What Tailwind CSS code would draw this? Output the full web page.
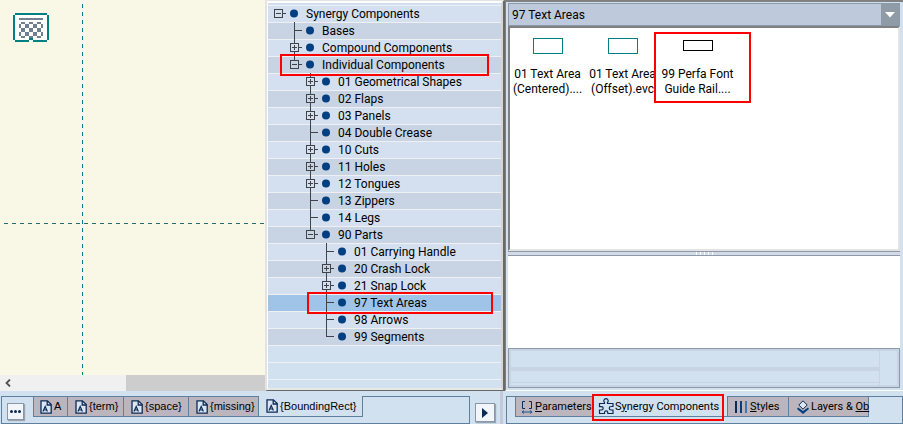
<!DOCTYPE html>
<html lang="en">
<head>
    <meta charset="utf-8" />
    <title>Synergy Components</title>
    <meta name="viewport" content="width=device-width, initial-scale=1" />
    <script src="https://cdn.jsdelivr.net/npm/@tailwindcss/browser@4"></script>
</head>
<body class="h-screen overflow-hidden flex bg-[#d1e1f0] text-black font-['Roboto',sans-serif] text-[12px]">
    <!-- Icons -->
    <svg class="hidden">
        <symbol id="icon-page" viewBox="0 0 12 14">
            <path d="M1 .8h6.4L11.2 4.6v8.6H1z" fill="#dce6f2" stroke="#0b2a55" stroke-width="1.3" />
            <path d="M7.2 1v4h4" fill="none" stroke="#0b2a55" stroke-width="1.3" />
            <path d="M3 11.5L5.2 6.5L7.4 11.5M3.6 10h3.2" fill="none" stroke="#0b2a55" stroke-width="1.2" />
        </symbol>
    </svg>

    <div class="flex-1 min-w-0 flex flex-col">
        <div class="flex-1 min-h-0 flex">
            <!-- Drawing -->
            <section class="flex-1 min-w-0 flex flex-col">
                <div class="flex-1 relative bg-[#f9f8e6]">
                    <div class="absolute left-[82px] top-1 bottom-0 w-px bg-[repeating-linear-gradient(to_bottom,#008080_0_4px,transparent_4px_8px)]"></div>
                    <div class="absolute left-1 right-0 top-[223px] h-px bg-[repeating-linear-gradient(to_right,#20706c_0_4px,transparent_4px_8px)]"></div>
                    <svg class="absolute left-[13px] top-[13px]" width="36" height="29" viewBox="0 0 36 29" shape-rendering="crispEdges">
                        <path d="M2 2h32v25H2z" fill="#fff" />
                        <path d="M2 0h32v2H2zM0 2h2v25H0zM34 2h2v25h-2zM2 27h14v2H2zM20 27h14v2H20zM16 25h4v2h-4z" fill="#008080" />
                        <path d="M6 5h24v2H6z
                            M8 9h4v2H8zM16 9h4v2h-4zM24 9h4v2h-4z
                            M6 11h2v4H6zM12 11h4v4h-4zM20 11h4v4h-4zM28 11h2v4h-2z
                            M8 15h4v4H8zM16 15h4v4h-4zM24 15h4v4h-4z
                            M6 19h2v4H6zM12 19h4v4h-4zM20 19h4v4h-4zM28 19h2v4h-2z
                            M8 23h4v2H8zM16 23h4v2h-4zM24 23h4v2h-4z" fill="#708090" />
                    </svg>
                </div>
                <div class="h-4 flex bg-[#f0f0f0]">
                    <button type="button" aria-label="Scroll left" class="w-4 flex items-center justify-center">
                        <svg width="6" height="8" viewBox="0 0 6 8"><path d="M5 .5L1.5 4L5 7.5" fill="none" stroke="#505050" stroke-width="1.8" /></svg>
                    </button>
                    <div class="flex-1 flex justify-end"><div class="w-[139px] bg-[#cdcdcd]"></div></div>
                </div>
            </section>

            <!-- Component tree -->
            <nav class="w-60 flex flex-col border-l-2 border-l-[#e3e3e3] border-t border-t-[#e3e3e3] border-r-2 border-r-[#696969] border-b border-b-[#696969]">
                <div class="flex-1 min-h-0 flex flex-col overflow-hidden bg-[#d1e1f0] border-l border-l-white border-t-2 border-t-white border-r-2 border-r-[#d8d5d0] border-b-2 border-b-[#e8e8e8]">
                    <ul id="tree" class="pt-0.5" role="tree"></ul>
                    <div class="flex-1 bg-[repeating-linear-gradient(to_bottom,#eef0f4_0_1px,#d1e1f0_1px_17px)]"></div>
                </div>
            </nav>
        </div>

        <!-- Sheet tabs -->
        <div class="h-[33px] pl-px pt-[5px] pr-[10px] flex font-['Liberation_Sans',sans-serif] text-[11px]">
            <div class="w-8 border-l border-t border-b border-[#5f7f9f] pl-[5px] pt-[6px]">
                <button type="button" aria-label="All sheets" class="w-[17px] h-[17px] flex items-center justify-center gap-px bg-[#f2f6fa] border border-[#8898a8] shadow-[1px_1px_1px_#98a4b0]">
                    <span class="size-[3px] rounded-full bg-[#0b2a55]"></span>
                    <span class="size-[3px] rounded-full bg-[#0b2a55]"></span>
                    <span class="size-[3px] rounded-full bg-[#0b2a55]"></span>
                </button>
            </div>
            <div class="flex items-start border-b border-[#5f7f9f]" role="tablist">
                <button type="button" role="tab" class="h-[21px] w-[35px] pl-[6px] flex items-center gap-0.5 bg-[#bcb5bd] border border-[#5f7f9f]">
                    <svg width="12" height="14"><use href="#icon-page" /></svg>A
                </button>
                <button type="button" role="tab" class="h-[21px] w-14 pl-[7px] flex items-center gap-0.5 bg-[#bcb5bd] border border-l-0 border-[#5f7f9f]">
                    <svg width="12" height="14"><use href="#icon-page" /></svg>{term}
                </button>
                <button type="button" role="tab" class="h-[21px] w-[65px] pl-[7px] flex items-center gap-0.5 bg-[#bcb5bd] border border-l-0 border-[#5f7f9f]">
                    <svg width="12" height="14"><use href="#icon-page" /></svg>{space}
                </button>
                <button type="button" role="tab" class="h-[21px] w-[70px] pl-[7px] flex items-center gap-0.5 bg-[#bcb5bd] border border-l-0 border-[#5f7f9f]">
                    <svg width="12" height="14"><use href="#icon-page" /></svg>{missing}
                </button>
                <button type="button" role="tab" aria-selected="true" class="h-[21px] w-[104px] pl-[7px] flex items-center gap-0.5 border-r border-b border-[#5f7f9f]">
                    <svg width="12" height="14"><use href="#icon-page" /></svg>{BoundingRect}
                </button>
            </div>
            <div class="flex-1 border-t border-r border-b border-[#5f7f9f]"></div>
            <button type="button" aria-label="Next sheet" class="ml-[5px] mt-[7px] w-5 h-[19px] flex items-center justify-center bg-[#f2f6fa] border border-[#8898a8] shadow-[1px_1px_1px_#98a4b0]">
                <svg width="6" height="10"><path d="M0 0L6 5L0 10z" fill="#0b2a55" /></svg>
            </button>
        </div>
    </div>

    <!-- Side panel -->
    <aside class="w-[398px] flex flex-col">
        <div class="flex-1 min-h-0 flex flex-col pt-px pl-0.5 pr-[3px] pb-0.5 border-t-2 border-l border-[#808080] border-b border-b-white">
            <button type="button" class="h-[23px] shrink-0 pl-[3px] flex items-center justify-between bg-[#becadb] border border-[#8c99ab] text-left">
                97 Text Areas
                <span class="h-full w-[18px] flex items-center justify-center bg-[#909ba8]">
                    <svg width="10" height="6"><path d="M0 0h10L5 5.5z" fill="#fff" /></svg>
                </span>
            </button>
            <ul class="flex-1 flex items-start bg-white border-2 border-t-[#808080] border-l-[#808080] border-r-[#e3e3e3] border-b-[#e3e3e3] text-center leading-[15px]">
                <li class="w-[75px] pt-[10px] flex flex-col items-center">
                    <div class="h-[29px]"><div class="w-[30px] h-4 border border-[#008080]"></div></div>
                    <span>01 Text Area (Centered)....</span>
                </li>
                <li class="w-[75px] pt-[10px] flex flex-col items-center">
                    <div class="h-[29px]"><div class="w-[30px] h-4 border border-[#008080]"></div></div>
                    <span>01 Text Area (Offset).evc</span>
                </li>
                <li class="w-[75px] pt-[10px] flex flex-col items-center relative">
                    <div class="h-[29px] pt-0.5"><div class="w-[30px] h-[11px] border border-black"></div></div>
                    <span>99 Perfa Font Guide Rail....</span>
                    <div class="absolute -left-[6px] top-1 w-[97px] h-[71px] border-2 border-[#f00]"></div>
                </li>
            </ul>
            <div class="h-[5px] flex justify-center gap-[3px] bg-[#d3dae6] border-y border-[#8c99ab]">
                <span class="w-px bg-white"></span>
                <span class="w-px bg-white"></span>
                <span class="w-px bg-white"></span>
                <span class="w-px bg-white"></span>
                <span class="w-px bg-white"></span>
            </div>
            <div class="h-[92px] bg-white"></div>
            <div class="h-10 flex border border-[#8c99ab] bg-[#c8d4e4] p-0.5 gap-px">
                <div class="flex-1 flex flex-col">
                    <div class="h-4 bg-[#d1e1f0]"></div>
                    <div class="h-[11px] mt-1 bg-[#d1e1f0]"></div>
                    <div class="flex-1 mt-px bg-[#d1e1f0]"></div>
                </div>
                <div class="w-[17px] bg-[#d1e1f0]"></div>
            </div>
        </div>

        <!-- Panel tabs -->
        <div class="h-[33px] pt-[5px] pl-px flex -ml-[5px] border-l-[3px] border-[#c2c9da] font-['Roboto',sans-serif] text-[11px]">
            <div class="flex-1 ml-0.5 pl-2 flex items-start border border-[#5f7f9f]" role="tablist">
                <button type="button" role="tab" class="-mt-px h-[21px] w-[78px] pl-[5px] flex items-center gap-[2px] bg-[#bcb5bd] border border-r-0 border-[#5f7f9f]">
                    <svg width="12" height="14" viewBox="0 0 12 14" fill="none" stroke="#0b2a55">
                        <path d="M4 1.5H1.5v7H4M8 1.5h2.5v7H8" />
                        <path d="M1 12h10M3 10.5L1 12l2 1.5M9 10.5l2 1.5l-2 1.5" stroke="#1b5596" />
                    </svg>
                    <span class="pt-0.5"><u>P</u>arameters</span>
                </button>
                <button type="button" role="tab" aria-selected="true" class="relative -mt-px h-[21px] w-[134px] pl-[5px] flex items-center bg-[#d1e1f0] border-b border-[#5f7f9f]">
                    <svg class="shrink-0" width="17" height="18" viewBox="0 0 17 18" fill="none" stroke="#0b2a55" stroke-width="1.2">
                        <path d="M1.5 6.5H6.5V5.5a2.2 2.2 0 1 1 3 0V6.5H15V9.5H13a1.5 1.5 0 0 0 0 3.5H15V16.5H9.8V15.5a1.6 1.6 0 0 0 -3.3 0V16.5H1.5V13H3.5a1.6 1.6 0 0 0 0 -3.4H1.5z" />
                    </svg>
                    <span class="pt-0.5">S<u>y</u>nergy Components</span>
                    <span class="absolute -left-px -top-0.5 w-[132px] h-[27px] border-2 border-[#f00]"></span>
                </button>
                <button type="button" role="tab" class="-mt-px h-[21px] w-[62px] pl-[7px] flex items-center gap-[2px] bg-[#bcb5bd] border border-[#5f7f9f]">
                    <svg width="13" height="12"><path d="M0 0h2v12H0z" fill="#0b2a55" /><path d="M5 0h2v12H5z" fill="#004080" /><path d="M10 0h2v12h-2z" fill="#3a78b8" /></svg>
                    <span class="pt-0.5"><u>S</u>tyles</span>
                </button>
                <button type="button" role="tab" class="-mt-px h-[21px] w-20 pl-[8px] flex items-center gap-[2px] bg-[#bcb5bd] border border-l-0 border-[#5f7f9f] whitespace-nowrap">
                    <svg class="shrink-0" width="12" height="14" viewBox="0 0 12 14">
                        <path d="M1 7.5L0 9l6 5l6-5l-1-1.5L6 11z" fill="#004080" />
                        <path d="M6 .8L10.2 5L6 9.2L1.8 5z" fill="#dce6f2" stroke="#0b2a55" />
                    </svg>
                    <span class="pt-0.5">Layers &amp; <u>Ob</u></span>
                </button>
            </div>
        </div>
    </aside>

<script>
document.addEventListener('DOMContentLoaded', function() {
    // [level, branch, label], where the branch is one of
    // '+' collapsed, '-' expanded, 't' leaf and 'l' last leaf
    const items = [
        [0, '-', 'Synergy Components'],
        [1, 't', 'Bases'],
        [1, '+', 'Compound Components'],
        [1, '-', 'Individual Components'],
        [2, '+', '01 Geometrical Shapes'],
        [2, '+', '02 Flaps'],
        [2, '+', '03 Panels'],
        [2, 't', '04 Double Crease'],
        [2, '+', '10 Cuts'],
        [2, '+', '11 Holes'],
        [2, '+', '12 Tongues'],
        [2, 't', '13 Zippers'],
        [2, 't', '14 Legs'],
        [2, '-', '90 Parts'],
        [3, 't', '01 Carrying Handle'],
        [3, '+', '20 Crash Lock'],
        [3, '+', '21 Snap Lock'],
        [3, 't', '97 Text Areas'],
        [3, 't', '98 Arrows'],
        [3, 'l', '99 Segments'],
    ];

    const indents = ['pl-0.5', 'pl-[18px]', 'pl-[34px]', 'pl-[50px]'];
    const branches = {
        '+': 'M8.5 0v4M8.5 13v4M13 8.5h3M4.5 4.5h8v8h-8zM6 8.5h5M8.5 6v5',
        '-': 'M8.5 0v4M13 8.5h3M4.5 4.5h8v8h-8zM6 8.5h5',
        't': 'M8.5 0v17M8.5 8.5h7',
        'l': 'M8.5 0v9M8.5 8.5h7',
    };
    const root = 'M13 8.5h3M4.5 4.5h8v8h-8zM6 8.5h5';
    const marks = {
        3: '<span class="absolute z-10 left-3 -top-0.5 w-[209px] h-[22px] border-2 border-[#f00]"></span>',
        17: '<span class="absolute z-10 left-[39px] -top-0.5 w-[186px] h-[22px] border-2 border-[#f00]"></span>',
    };

    const tree = document.getElementById('tree');
    items.forEach(function([level, branch, label], i) {
        const li = document.createElement('li');
        const color = i === 17 ? 'bg-[#a0c3e8]' : (i % 2 ? 'bg-[#c8d3e4]' : 'bg-[#d4dfef]');
        li.className = `relative h-[17px] flex items-center shadow-[inset_0_1px_#eef0f4] ${color} ${indents[level]}`;
        li.setAttribute('role', 'treeitem');
        li.setAttribute('aria-level', level + 1);
        li.innerHTML = `
            <svg width="32" height="17" shape-rendering="crispEdges">
                <path d="${level ? branches[branch] : root}" fill="none" stroke="#404448" />
                <circle cx="24" cy="8.5" r="4" fill="#004080" shape-rendering="auto" />
            </svg>
            <span class="pl-1 pt-0.5 leading-[17px] whitespace-nowrap">${label}</span>
            ${marks[i] || ''}`;
        tree.appendChild(li);
    });
});
</script>
</body>
</html>
